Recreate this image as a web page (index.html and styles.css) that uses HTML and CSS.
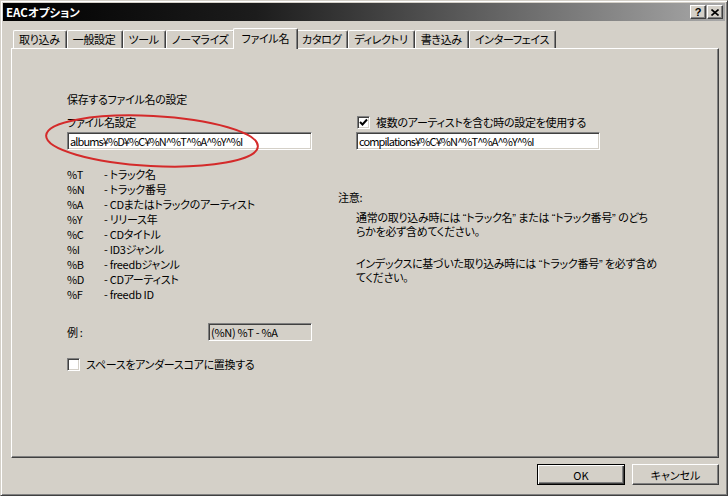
FILE: index.html
```html
<!DOCTYPE html>
<html lang="ja">
<head>
  <meta charset="UTF-8">
  <title>EACオプション</title>
  <link rel="stylesheet" href="styles.css">
</head>
<body>
  <div class="window">

    <div class="title-bar">
      <span class="title-text">EACオプション</span>
      <div class="title-buttons">
        <button class="title-btn">?</button>
        <button class="title-btn">
          <svg width="8" height="7" viewBox="0 0 8 7">
            <path d="M0.5 0.5 L7.5 6.5 M7.5 0.5 L0.5 6.5" stroke="#000" stroke-width="1.6"/>
          </svg>
        </button>
      </div>
    </div>

    <div class="tabs">
      <div class="tab">取り込み</div>
      <div class="tab">一般設定</div>
      <div class="tab">ツール</div>
      <div class="tab">ノーマライズ</div>
      <div class="tab tab-active">ファイル名</div>
      <div class="tab">カタログ</div>
      <div class="tab">ディレクトリ</div>
      <div class="tab">書き込み</div>
      <div class="tab">インターフェイス</div>
    </div>

    <div class="panel">

      <!-- red mark around the file name field -->
      <svg class="circle-mark" width="220" height="60" viewBox="0 0 220 60">
        <ellipse cx="110" cy="30" rx="106" ry="25" transform="rotate(3 110 30)"
          fill="none" stroke="#d42a2a" stroke-width="2"/>
      </svg>

      <div class="col-left">
        <p class="heading">保存するファイル名の設定</p>
        <p class="field-label">ファイル名設定</p>
        <div class="text-input">albums¥%D¥%C¥%N^%T^%A^%Y^%I</div>

        <ul class="codes">
          <li><span class="code">%T</span>- トラック名</li>
          <li><span class="code">%N</span>- トラック番号</li>
          <li><span class="code">%A</span>- CDまたはトラックのアーティスト</li>
          <li><span class="code">%Y</span>- リリース年</li>
          <li><span class="code">%C</span>- CDタイトル</li>
          <li><span class="code">%I</span>- ID3ジャンル</li>
          <li><span class="code">%B</span>- freedbジャンル</li>
          <li><span class="code">%D</span>- CDアーティスト</li>
          <li><span class="code">%F</span>- freedb ID</li>
        </ul>

        <div class="example-row">
          <span>例 :</span>
          <div class="example-box">(%N) %T - %A</div>
        </div>

        <label class="check-row space-row">
          <span class="checkbox"></span>
          スペースをアンダースコアに置換する
        </label>
      </div>

      <div class="col-right">
        <label class="check-row">
          <span class="checkbox">
            <svg width="9" height="9" viewBox="0 0 9 9">
              <path d="M1 4 L3.5 6.5 L8 1.5" fill="none" stroke="#000" stroke-width="2"/>
            </svg>
          </span>
          複数のアーティストを含む時の設定を使用する
        </label>
        <div class="text-input">compilations¥%C¥%N^%T^%A^%Y^%I</div>

        <p class="note-title">注意:</p>
        <p class="note">通常の取り込み時には “トラック名” または “トラック番号” のどち<br>らかを必ず含めてください。</p>
        <p class="note note-second">インデックスに基づいた取り込み時には “トラック番号” を必ず含め<br>てください。</p>
      </div>
    </div>

    <div class="footer">
      <button class="btn btn-default">OK</button>
      <button class="btn">キャンセル</button>
    </div>

  </div>
</body>
</html>
```

FILE: styles.css
```css
body {
  margin: 0;
  background: #d4d0c8;
  font-family: "Noto Sans CJK JP", sans-serif;
  font-size: 11px;
  letter-spacing: -0.3px;
  font-feature-settings: "palt";
  color: #000;
}

p {
  margin: 0;
}

.window {
  width: 728px;
  height: 496px;
  box-sizing: border-box;
  padding: 2px;
  background: #d4d0c8;
  border: 1px solid;
  border-color: #d4d0c8 #404040 #404040 #d4d0c8;
  box-shadow: inset 1px 1px #fff, inset -1px -1px #808080;
}

/* title bar */

.title-bar {
  height: 18px;
  display: flex;
  align-items: center;
  justify-content: space-between;
  padding: 0 2px 0 3px;
  background: linear-gradient(to right, #000 0%, #1c1c1c 35%, #a8a8a8 100%);
}

.title-text {
  color: #fff;
  font-weight: bold;
  font-size: 11.5px;
  letter-spacing: 0;
}

.title-buttons {
  display: flex;
}

.title-btn {
  width: 16px;
  height: 14px;
  padding: 0;
  margin-left: 1px;
  display: flex;
  align-items: center;
  justify-content: center;
  background: #d4d0c8;
  border: 1px solid;
  border-color: #fff #404040 #404040 #fff;
  box-shadow: inset -1px -1px #808080;
  font-family: "Liberation Sans", sans-serif;
  font-weight: bold;
  font-size: 11px;
  line-height: 12px;
}

/* tabs */

.tabs {
  height: 27px;
  display: flex;
  align-items: flex-end;
  padding-left: 10px;
}

.tab {
  height: 18px;
  box-sizing: border-box;
  padding: 0 6px 0 5px;
  line-height: 17px;
  border-top: 1px solid #fff;
  border-left: 1px solid #fff;
  border-right: 1px solid #404040;
  border-radius: 2px 2px 0 0;
  box-shadow: inset -1px 0 #808080;
  white-space: nowrap;
}

.tab-active {
  position: relative;
  z-index: 1;
  height: 21px;
  margin: 0 -2px -1px -2px;
  padding: 0 8px 2px 7px;
  background: #d4d0c8;
  line-height: 19px;
}

/* panel */

.panel {
  position: relative;
  width: 708px;
  height: 410px;
  box-sizing: border-box;
  margin-left: 8px;
  padding: 43px 0 0 55px;
  display: flex;
  gap: 44px;
  border: 1px solid;
  border-color: #fff #404040 #404040 #fff;
  box-shadow: inset -1px -1px #808080;
  line-height: 15px;
}

.circle-mark {
  position: absolute;
  left: 30px;
  top: 62px;
  z-index: 2;
}

.col-left {
  width: 245px;
}

.col-right {
  width: 310px;
  padding-top: 23px;
}

.field-label {
  margin-top: 8px;
}

.text-input {
  height: 18px;
  box-sizing: border-box;
  margin-top: 2px;
  padding: 0 2px;
  background: #fff;
  border: 1px solid;
  border-color: #808080 #fff #fff #808080;
  box-shadow: inset 1px 1px #404040, inset -1px -1px #d4d0c8;
  line-height: 16px;
  letter-spacing: -0.9px;
  white-space: nowrap;
  overflow: hidden;
}

.col-right .text-input {
  width: 244px;
}

.codes {
  list-style: none;
  margin: 17px 0 0 0;
  padding: 0;
}

.code {
  display: inline-block;
  width: 37px;
}

.example-row {
  margin-top: 21px;
  display: flex;
  align-items: center;
  justify-content: space-between;
}

.example-box {
  width: 104px;
  height: 18px;
  box-sizing: border-box;
  padding: 0 2px;
  border: 1px solid;
  border-color: #808080 #fff #fff #808080;
  box-shadow: inset 1px 1px #404040, inset -1px -1px #d4d0c8;
  line-height: 16px;
}

.check-row {
  display: flex;
  align-items: center;
  gap: 6px;
}

.space-row {
  margin-top: 16px;
}

.checkbox {
  width: 13px;
  height: 13px;
  box-sizing: border-box;
  display: flex;
  align-items: center;
  justify-content: center;
  background: #fff;
  border: 1px solid;
  border-color: #808080 #fff #fff #808080;
  box-shadow: inset 1px 1px #404040, inset -1px -1px #d4d0c8;
}

.col-right .check-row {
  margin-left: 1px;
}

.note-title {
  margin: 40px 0 0 -18px;
}

.note {
  margin-top: 6px;
  line-height: 14px;
  font-family: "Liberation Sans", "Noto Sans CJK JP", sans-serif;
  white-space: nowrap;
}

.note-second {
  margin-top: 18px;
}

/* bottom buttons */

.footer {
  display: flex;
  justify-content: flex-end;
  gap: 7px;
  margin-top: 6px;
  padding-right: 6px;
}

.btn {
  width: 87px;
  height: 21px;
  box-sizing: border-box;
  padding: 0;
  background: #d4d0c8;
  border: 1px solid;
  border-color: #fff #404040 #404040 #fff;
  box-shadow: inset -1px -1px #808080;
  font-family: "Noto Sans CJK JP", sans-serif;
  font-size: 11px;
  font-feature-settings: "palt";
}

.btn-default {
  width: 88px;
  border: 1px solid #000;
  box-shadow: inset 1px 1px #fff, inset -1px -1px #404040, inset -2px -2px #808080;
}
```
